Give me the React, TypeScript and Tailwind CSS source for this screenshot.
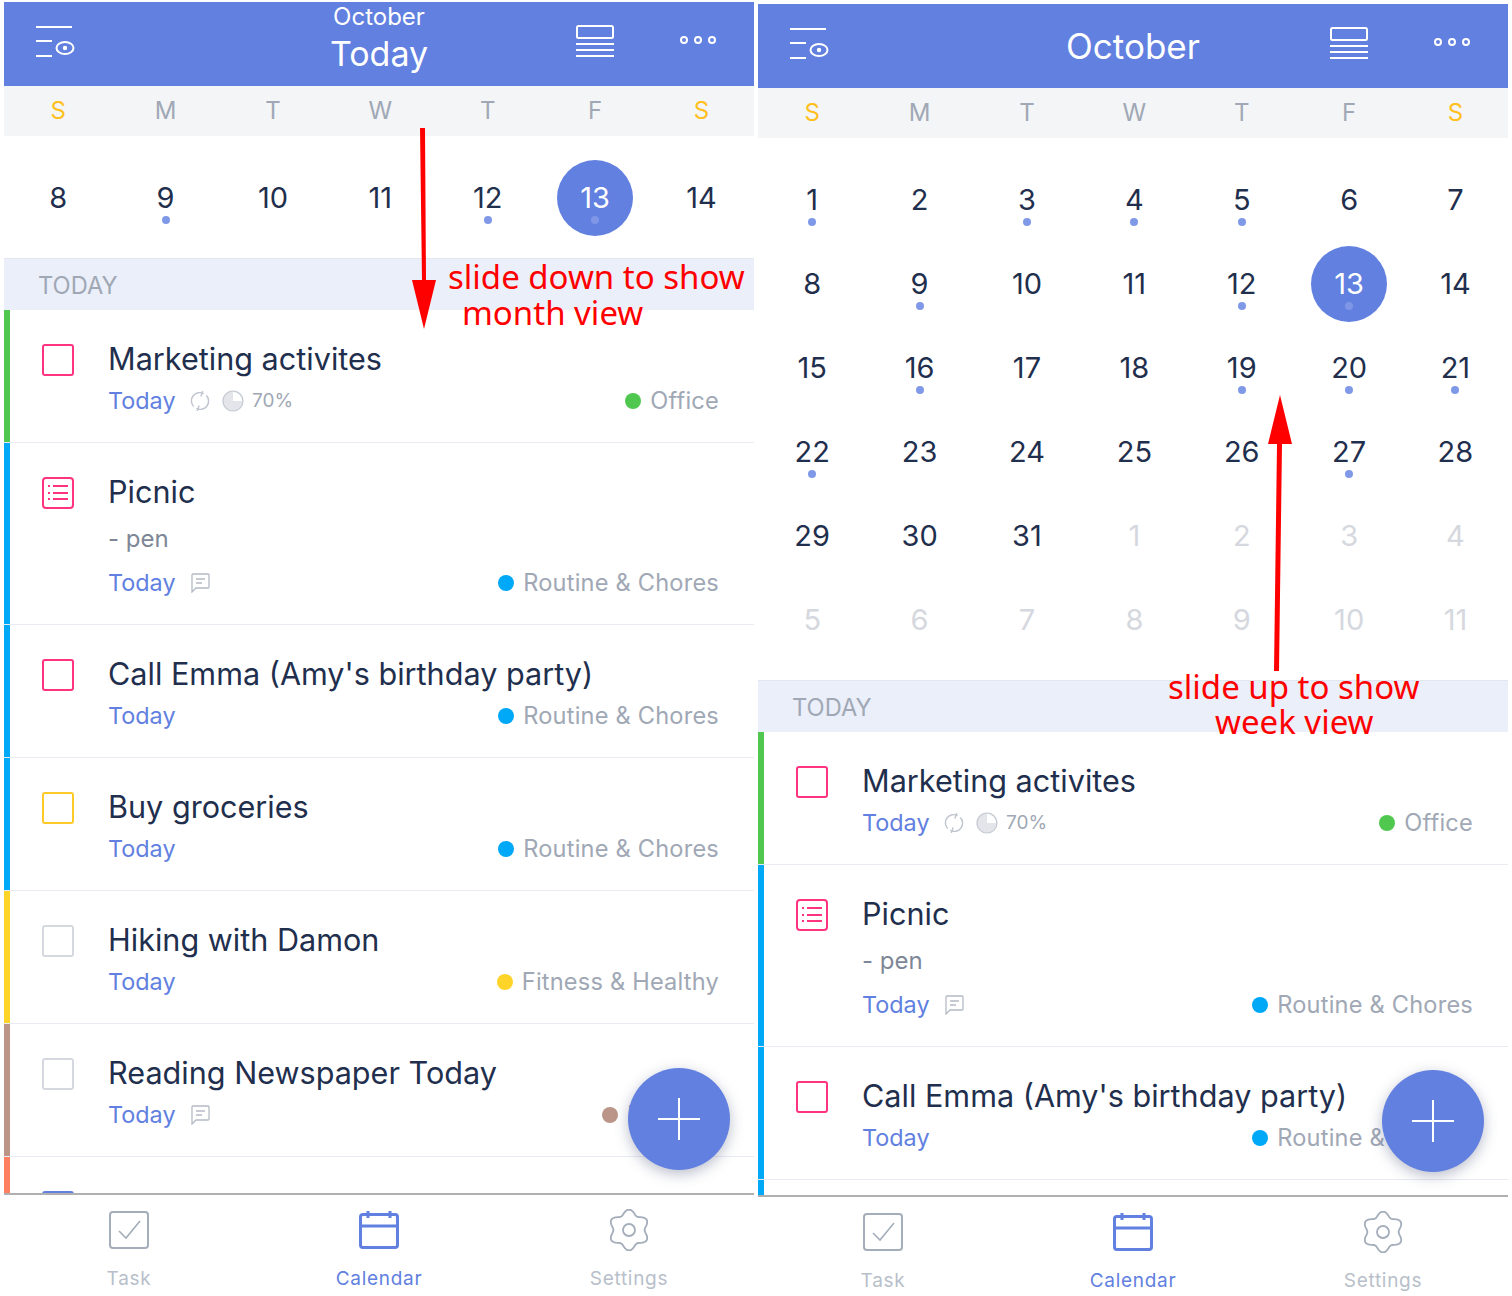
import React from "react";

type Task = {
  title: string;
  note?: string;
  box: string;
  bar: string;
  list?: boolean;
  tag: string;
  dot: string;
  extras?: "progress" | "comment";
};

const tasks: Task[] = [
  { title: "Marketing activites", box: "border-[#ff3380]", bar: "bg-[#50c850]", tag: "Office", dot: "bg-[#50c850]", extras: "progress" },
  { title: "Picnic", note: "- pen", box: "border-[#ff3380]", bar: "bg-[#00a8f8]", list: true, tag: "Routine & Chores", dot: "bg-[#00a8f8]", extras: "comment" },
  { title: "Call Emma (Amy's birthday party)", box: "border-[#ff3380]", bar: "bg-[#00a8f8]", tag: "Routine & Chores", dot: "bg-[#00a8f8]" },
  { title: "Buy groceries", box: "border-[#ffc928]", bar: "bg-[#00a8f8]", tag: "Routine & Chores", dot: "bg-[#00a8f8]" },
  { title: "Hiking with Damon", box: "border-[#d5d9df]", bar: "bg-[#ffd428]", tag: "Fitness & Healthy", dot: "bg-[#ffd428]" },
  { title: "Reading Newspaper Today", box: "border-[#d5d9df]", bar: "bg-[#bb9688]", tag: "Reading", dot: "bg-[#bb9688]", extras: "comment" },
  { title: "Read book", box: "border-[#6180df]", bar: "bg-[#ff8060]", tag: "Work", dot: "bg-[#ff8060]" },
];

const weekdays = ["S", "M", "T", "W", "T", "F", "S"];

// numbers with a small dot underneath
const marked = [1, 3, 4, 5, 9, 12, 13, 16, 19, 20, 21, 22, 27];

function MenuEyeIcon() {
  return (
    <svg width="40" height="32" viewBox="0 0 40 32" fill="none" stroke="white" strokeWidth="2">
      <path d="M0 1H36M0 15H16M0 30H16" />
      <ellipse cx="29" cy="22" rx="8.5" ry="6" />
      <circle cx="29" cy="22" r="2.2" fill="white" stroke="none" />
    </svg>
  );
}

function ViewIcon() {
  return (
    <svg width="38" height="32" viewBox="0 0 38 32" fill="none" stroke="white" strokeWidth="2">
      <rect x="1" y="1" width="36" height="12" rx="1.5" />
      <path d="M0 19H38M0 25H38M0 31H38" />
    </svg>
  );
}

function DotsIcon() {
  return (
    <svg width="38" height="10" viewBox="0 0 38 10" fill="none" stroke="white" strokeWidth="2">
      <circle cx="5" cy="5" r="3" />
      <circle cx="19" cy="5" r="3" />
      <circle cx="33" cy="5" r="3" />
    </svg>
  );
}

function ListBoxIcon() {
  return (
    <svg width="32" height="32" viewBox="0 0 32 32" fill="none" stroke="#ff3380" strokeWidth="2">
      <rect x="1" y="1" width="30" height="30" rx="3" />
      <path d="M6 9H8M11 9H26M6 16H8M11 16H26M6 22H8M11 22H26" />
    </svg>
  );
}

function RepeatIcon() {
  return (
    <svg width="20" height="20" viewBox="0 0 22 22" fill="none" stroke="#c0c5cf" strokeWidth="1.6">
      <path d="M4 17A9 9 0 0 1 15 3M18 5A9 9 0 0 1 7 19" />
      <path d="M14 0L12 6M8 22L10 16" />
    </svg>
  );
}

function PieIcon() {
  return (
    <svg width="22" height="22" viewBox="0 0 22 22">
      <circle cx="11" cy="11" r="10" fill="#e3e5ea" stroke="#c4c9d2" strokeWidth="1.2" />
      <path d="M11 2A9 9 0 0 1 20 11L11 11Z" fill="white" />
    </svg>
  );
}

function CommentIcon() {
  return (
    <svg width="19" height="20" viewBox="0 0 19 20" fill="none" stroke="#b4bac5" strokeWidth="1.3">
      <path d="M1 2Q1 1 2 1H17Q18 1 18 2V14Q18 15 17 15H5L1 19Z" />
      <path d="M5 6H14M5 10H11" />
    </svg>
  );
}

function TaskIcon() {
  return (
    <svg width="40" height="38" viewBox="0 0 40 38" fill="none" stroke="#a4adba" strokeWidth="2">
      <rect x="1" y="1" width="38" height="36" rx="3" />
      <path d="M10 20L17 27L31 10" strokeWidth="1.6" />
    </svg>
  );
}

function CalendarIcon() {
  return (
    <svg width="40" height="38" viewBox="0 0 40 38" fill="none" stroke="#6180df" strokeWidth="3">
      <rect x="1.5" y="3.5" width="37" height="33" rx="2.5" />
      <path d="M1.5 15H38.5M9 0V7M31 0V7" />
    </svg>
  );
}

function gearPath() {
  const pts: string[] = [];
  for (let i = 0; i < 120; i++) {
    const a = (i / 120) * Math.PI * 2;
    const r = 18 + 2.4 * Math.cos(6 * a);
    const x = 21 + r * Math.sin(a);
    const y = 21 - r * Math.cos(a);
    pts.push(`${x.toFixed(2)} ${y.toFixed(2)}`);
  }
  return "M" + pts.join("L") + "Z";
}

function GearIcon() {
  return (
    <svg width="42" height="42" viewBox="0 0 42 42" fill="none" stroke="#a4adba" strokeWidth="1.8">
      <path d={gearPath()} />
      <circle cx="21" cy="21" r="6" />
    </svg>
  );
}

function Day({ n, muted, today, dot }: { n: number; muted?: boolean; today?: boolean; dot?: boolean }) {
  return (
    <div className="relative flex h-[84px] items-center justify-center">
      {today && <div className="absolute mt-[2px] h-[76px] w-[76px] rounded-full bg-[#6180df]" />}
      <span className={`relative text-[29px] leading-none ${today ? "text-white" : muted ? "text-[#d5d8de]" : "text-[#1f2f4d]"}`}>
        {n}
      </span>
      {dot && <div className={`absolute top-[61px] h-2 w-2 rounded-full ${today ? "bg-[#7f96e6]" : "bg-[#7f99e8]"}`} />}
    </div>
  );
}

function DayGrid({ children }: { children: React.ReactNode }) {
  return <div className="ml-[0.5px] grid grid-cols-[repeat(6,107.4px)_1fr]">{children}</div>;
}

function WeekHeader() {
  return (
    <div className="h-[50px] shrink-0 bg-[#f4f5f7]">
      <DayGrid>
        {weekdays.map((d, i) => (
          <div
            key={i}
            className={`flex h-[50px] items-center justify-center text-[24px] ${i === 0 || i === 6 ? "text-[#ffc01e]" : "text-[#a0a8b5]"}`}
          >
            {d}
          </div>
        ))}
      </DayGrid>
    </div>
  );
}

function TaskRow({ task }: { task: Task }) {
  return (
    <div className="flex border-b border-[#e9ebf3]">
      <div className={`w-[6px] shrink-0 ${task.bar}`} />
      <div className="ml-[32px] mt-[34px] h-[32px] w-[32px] shrink-0">
        {task.list ? <ListBoxIcon /> : <div className={`h-[32px] w-[32px] rounded-[3px] border-2 ${task.box}`} />}
      </div>
      <div className="ml-[34px] min-w-0 flex-1 pb-[25px] pr-[35px] pt-[30px]">
        <div className="text-[30.6px] leading-[38px] text-[#1f2f4d]">{task.title}</div>
        {task.note && <div className="mt-[11px] h-[34px] text-[24px] leading-[34px] text-[#7d8796]">{task.note}</div>}
        <div className={`${task.note ? "mt-[11px]" : "mt-[7px]"} flex h-[32px] items-center`}>
          <div className="flex flex-1 items-center">
            <span className="w-[66px] whitespace-nowrap text-[23.4px] text-[#6180df]">Today</span>
            {task.extras === "progress" && (
              <div className="ml-[16px] flex items-center gap-[12px]">
                <RepeatIcon />
                <div className="flex items-center gap-[8px]">
                  <PieIcon />
                  <span className="text-[19px] text-[#a0a8b5]">70%</span>
                </div>
              </div>
            )}
            {task.extras === "comment" && (
              <div className="ml-[17px] flex items-center">
                <CommentIcon />
              </div>
            )}
          </div>
          <div className="flex items-center gap-[9px]">
            <div className={`h-4 w-4 rounded-full ${task.dot}`} />
            <span className="text-[23.6px] tracking-[0.2px] text-[#a0a8b5]">{task.tag}</span>
          </div>
        </div>
      </div>
    </div>
  );
}

function Phone({ month }: { month?: boolean }) {
  const days = [
    ...Array.from({ length: 31 }, (_, i) => ({ n: i + 1, muted: false })),
    ...Array.from({ length: 11 }, (_, i) => ({ n: i + 1, muted: true })),
  ];
  const shown = month ? tasks.slice(0, 4) : tasks;
  return (
    <div className={`relative flex h-[1294px] w-[750px] flex-col overflow-hidden bg-white ${month ? "mt-[4px]" : "mt-[2px]"}`}>
      <header className="grid h-[84px] shrink-0 grid-cols-[1fr_auto_1fr] items-center bg-[#6180df] text-white">
        <div className="ml-[32px] mt-[-4px]">
          <MenuEyeIcon />
        </div>
        <div className="flex flex-col items-center">
          {month ? (
            <span className="text-[35px] leading-[42px]">October</span>
          ) : (
            <>
              <span className="mt-[-10px] text-[24px] leading-[28px]">October</span>
              <span className="mt-[1px] text-[34px] leading-[44px]">Today</span>
            </>
          )}
        </div>
        <div className="mr-[37px] mt-[-7px] flex items-center justify-end gap-[65px]">
          <ViewIcon />
          <div className="mt-[-1px]">
            <DotsIcon />
          </div>
        </div>
      </header>
      <WeekHeader />
      {month ? (
        <div className="h-[542px] shrink-0 py-[19px]">
          <DayGrid>
            {days.map((d, i) => (
              <Day key={i} n={d.n} muted={d.muted} today={!d.muted && d.n === 13} dot={!d.muted && marked.includes(d.n)} />
            ))}
          </DayGrid>
        </div>
      ) : (
        <div className="h-[122px] shrink-0 py-[19px]">
          <DayGrid>
            {[8, 9, 10, 11, 12, 13, 14].map((n) => (
              <Day key={n} n={n} today={n === 13} dot={marked.includes(n)} />
            ))}
          </DayGrid>
        </div>
      )}
      <div className="flex h-[52px] shrink-0 items-center border-t border-[#e3e6ee] bg-[#ebeff9] pl-[34px] pt-[2px] text-[23.7px] text-[#a0a8b5]">
        TODAY
      </div>
      <div className="min-h-0 flex-1 overflow-hidden">
        {shown.map((t) => (
          <TaskRow key={t.title} task={t} />
        ))}
      </div>
      <nav className="grid h-[103px] shrink-0 grid-cols-3 border-t-2 border-[#b0b0b0] bg-white">
        <div className="flex flex-col items-center pt-[16px]">
          <TaskIcon />
          <span className="mt-[16px] text-[19px] tracking-[0.7px] text-[#b8bfca]">Task</span>
        </div>
        <div className="flex flex-col items-center pt-[16px]">
          <CalendarIcon />
          <span className="mt-[16px] text-[19px] tracking-[0.7px] text-[#6180df]">Calendar</span>
        </div>
        <div className="flex flex-col items-center pt-[14px]">
          <GearIcon />
          <span className="mt-[14px] text-[19px] tracking-[0.7px] text-[#b8bfca]">Settings</span>
        </div>
      </nav>
      <button className="absolute bottom-[126px] right-[24px] flex h-[102px] w-[102px] items-center justify-center rounded-full bg-[#6180df] shadow-[0_4px_14px_rgba(60,70,110,0.35)]">
        <svg width="42" height="42" viewBox="0 0 42 42" stroke="white" strokeWidth="2">
          <path d="M21 0V42M0 21H42" />
        </svg>
      </button>
    </div>
  );
}

export default function App() {
  return (
    <div
      className="relative flex h-[1296px] w-[1512px] gap-[4px] overflow-hidden bg-white pl-[4px]"
      style={{ fontFamily: "Inter, 'Liberation Sans', sans-serif" }}
    >
      <Phone />
      <Phone month />

      {/* red notes drawn over the two screens */}
      <svg className="absolute left-[405px] top-[125px]" width="40" height="206" viewBox="0 0 40 206" fill="red">
        <path d="M15 3H20L21 155H31L19 204L7 155H17Z" />
      </svg>
      <svg className="absolute left-[1260px] top-[392px]" width="40" height="282" viewBox="0 0 40 282" fill="red">
        <path d="M20 3L32 52H22L19 279H14L17 52H8Z" />
      </svg>
      <div className="absolute left-[448px] top-[258px] whitespace-nowrap text-[33px] leading-[38px] text-[#ff0000]" style={{ fontFamily: "'Noto Sans', sans-serif" }}>
        slide down to show
      </div>
      <div className="absolute left-[462px] top-[294px] whitespace-nowrap text-[33px] leading-[38px] text-[#ff0000]" style={{ fontFamily: "'Noto Sans', sans-serif" }}>
        month view
      </div>
      <div className="absolute left-[1168px] top-[668px] whitespace-nowrap text-[33px] leading-[38px] text-[#ff0000]" style={{ fontFamily: "'Noto Sans', sans-serif" }}>
        slide up to show
      </div>
      <div className="absolute left-[1215px] top-[703px] whitespace-nowrap text-[33px] leading-[38px] text-[#ff0000]" style={{ fontFamily: "'Noto Sans', sans-serif" }}>
        week view
      </div>
    </div>
  );
}
